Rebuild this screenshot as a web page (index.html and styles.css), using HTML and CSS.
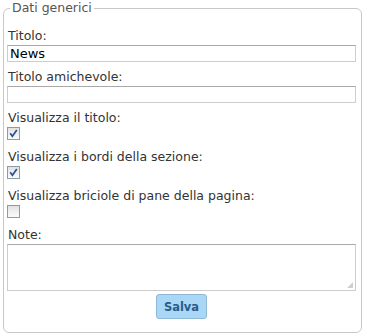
FILE: index.html
```html
<!DOCTYPE html>
<html>
<head>
<meta charset="utf-8">
<link rel="stylesheet" href="styles.css">
</head>
<body>
<form class="form">
  <fieldset class="box">
    <legend class="legend">Dati generici</legend>
    <div class="field">
      <label class="label">Titolo:</label>
      <div class="input">News</div>
    </div>
    <div class="field">
      <label class="label">Titolo amichevole:</label>
      <div class="input"></div>
    </div>
    <div class="field">
      <label class="label">Visualizza il titolo:</label>
      <span class="check"><svg width="11" height="11" viewBox="0 0 11 11"><path d="M2.2 5.2 L4.4 8.2 L8.8 2" fill="none" stroke="#2b4f93" stroke-width="1.7"/></svg></span>
    </div>
    <div class="field">
      <label class="label">Visualizza i bordi della sezione:</label>
      <span class="check"><svg width="11" height="11" viewBox="0 0 11 11"><path d="M2.2 5.2 L4.4 8.2 L8.8 2" fill="none" stroke="#2b4f93" stroke-width="1.7"/></svg></span>
    </div>
    <div class="field">
      <label class="label">Visualizza briciole di pane della pagina:</label>
      <span class="check"></span>
    </div>
    <div class="field">
      <label class="label">Note:</label>
      <div class="textarea"><span class="grip"></span></div>
    </div>
    <div class="actions">
      <button type="button" class="btn">Salva</button>
    </div>
  </fieldset>
</form>
</body>
</html>
```
FILE: styles.css
```css
html, body {
  margin: 0;
  padding: 0;
  background: #fff;
}
.form {
  padding: 0 3px 0 3px;
  font-family: "DejaVu Sans", Verdana, sans-serif;
  font-size: 12.5px;
  line-height: 16px;
  color: #333;
}
.box {
  margin: 0;
  border: 1px solid #c8c8c8;
  border-radius: 6px;
  padding: 0 5px 13px 3px;
  min-inline-size: 0;
}
.legend {
  padding: 0 2px;
  margin-left: 3px;
  color: #555;
  line-height: 16px;
}
.field {
  display: flex;
  flex-direction: column;
  align-items: flex-start;
  margin-top: 7px;
}
.field:first-of-type {
  margin-top: 12px;
}
.label {
  line-height: 16px;
  height: 16px;
  padding-left: 1px;
}
.input {
  align-self: stretch;
  margin-top: 1px;
  height: 15px;
  border: 1px solid #cdcdcd;
  border-top-color: #a9a9a9;
  color: #000;
  font-size: 13px;
  line-height: 15px;
  padding: 0 2px;
}
.check {
  margin-top: 1px;
  margin-bottom: 2px;
  width: 11px;
  height: 11px;
  border: 1px solid #8e9aa6;
  background: linear-gradient(#e2e2e2, #fbfbfb);
  display: block;
}
.check svg {
  display: block;
}
.textarea {
  align-self: stretch;
  position: relative;
  margin-top: 1px;
  height: 45px;
  border: 1px solid #cdcdcd;
  border-top-color: #a9a9a9;
}
.grip {
  position: absolute;
  right: 2px;
  bottom: 2px;
  width: 6px;
  height: 6px;
  background:
    radial-gradient(circle, #999 0.6px, transparent 0.8px) 0 0 / 2px 2px;
  clip-path: polygon(100% 0, 100% 100%, 0 100%);
}
.actions {
  display: flex;
  justify-content: center;
  margin-top: 3px;
}
.btn {
  width: 51px;
  height: 25px;
  background: #a8d8f6;
  border: 1px solid #8fb8d6;
  border-radius: 3px;
  color: #2b5c8c;
  font-family: "DejaVu Sans", Verdana, sans-serif;
  font-weight: bold;
  font-size: 11.5px;
  padding: 0;
}
```
